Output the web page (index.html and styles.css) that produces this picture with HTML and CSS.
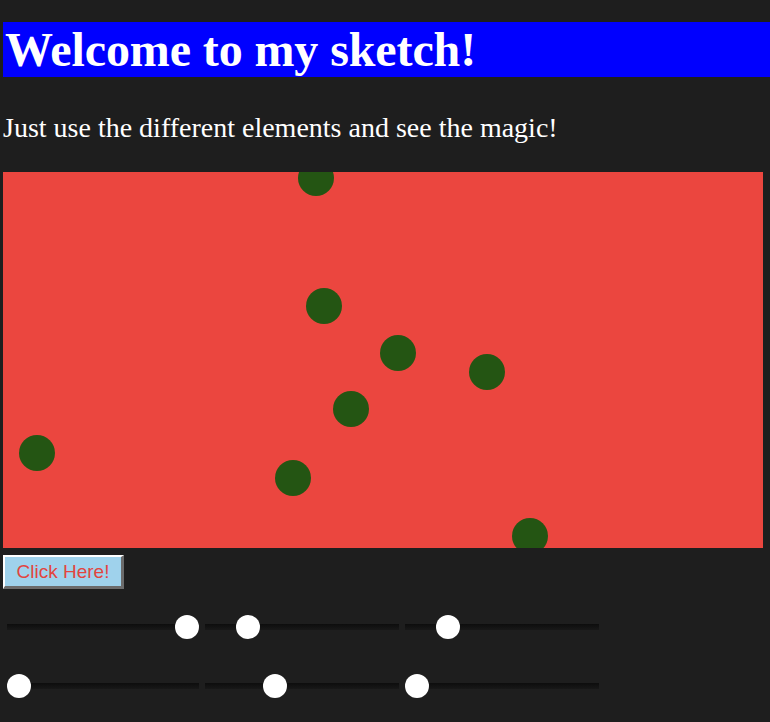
FILE: index.html
```html
<!DOCTYPE html>
<html>
<head>
<meta charset="utf-8">
<link rel="stylesheet" href="styles.css">
</head>
<body>
<h1 class="title">Welcome to my sketch!</h1>
<p class="intro">Just use the different elements and see the magic!</p>
<svg class="sketch" width="760" height="376" viewBox="0 0 760 376">
  <rect width="760" height="376" fill="#eb463f"/>
  <g fill="#245513">
    <circle cx="313" cy="6" r="18"/>
    <circle cx="321" cy="134" r="18"/>
    <circle cx="395" cy="181" r="18"/>
    <circle cx="484" cy="200" r="18"/>
    <circle cx="348" cy="237" r="18"/>
    <circle cx="34" cy="281" r="18"/>
    <circle cx="290" cy="306" r="18"/>
    <circle cx="527" cy="364" r="18"/>
  </g>
</svg>
<div class="controls">
  <button class="btn">Click Here!</button>
  <div class="sliders">
    <input class="slider" type="range" min="0" max="100" value="100">
    <input class="slider" type="range" min="0" max="100" value="18">
    <input class="slider" type="range" min="0" max="100" value="18">
    <input class="slider" type="range" min="0" max="100" value="0">
    <input class="slider" type="range" min="0" max="100" value="34">
    <input class="slider" type="range" min="0" max="100" value="0">
  </div>
</div>
</body>
</html>
```
FILE: styles.css
```css
html, body {
  background: #1e1e1e;
}
body {
  margin: 0;
  padding: 22px 0 0 3px;
  width: 767px;
  overflow: hidden;
  font-family: "Liberation Serif", "Times New Roman", serif;
  color: #ffffff;
}
.title {
  margin: 0;
  background: #0000ff;
  font-size: 48px;
  font-weight: bold;
  line-height: 55px;
  height: 55px;
  padding-left: 2px;
  white-space: nowrap;
  letter-spacing: -0.1px;
}
.intro {
  margin: 36px 0 0 0;
  font-size: 28px;
  line-height: 30px;
  white-space: nowrap;
}
.sketch {
  display: block;
  margin-top: 29px;
}
.controls {
  display: flex;
  flex-direction: column;
  align-items: flex-start;
}
.btn {
  margin-top: 7px;
  width: 121px;
  height: 34px;
  background: #9fd2ec;
  color: #e2443e;
  font-family: "Liberation Sans", Arial, sans-serif;
  font-size: 19px;
  border-style: solid;
  border-width: 2px 3px 3px 2px;
  border-color: #ffffff #6b6b6b #6b6b6b #ffffff;
  padding: 0;
}
.sliders {
  display: grid;
  grid-template-columns: 192px 194px 194px;
  column-gap: 6px;
  row-gap: 35px;
  margin: 26px 0 0 4px;
}
.slider {
  -webkit-appearance: none;
  appearance: none;
  width: 100%;
  height: 24px;
  margin: 0;
  background: transparent;
}
.slider::-webkit-slider-runnable-track {
  height: 6px;
  background: linear-gradient(#0d0d0d, #181818);
  border: none;
}
.slider::-webkit-slider-thumb {
  -webkit-appearance: none;
  appearance: none;
  width: 24px;
  height: 24px;
  border-radius: 50%;
  background: #ffffff;
  border: none;
  margin-top: -9px;
}
```
